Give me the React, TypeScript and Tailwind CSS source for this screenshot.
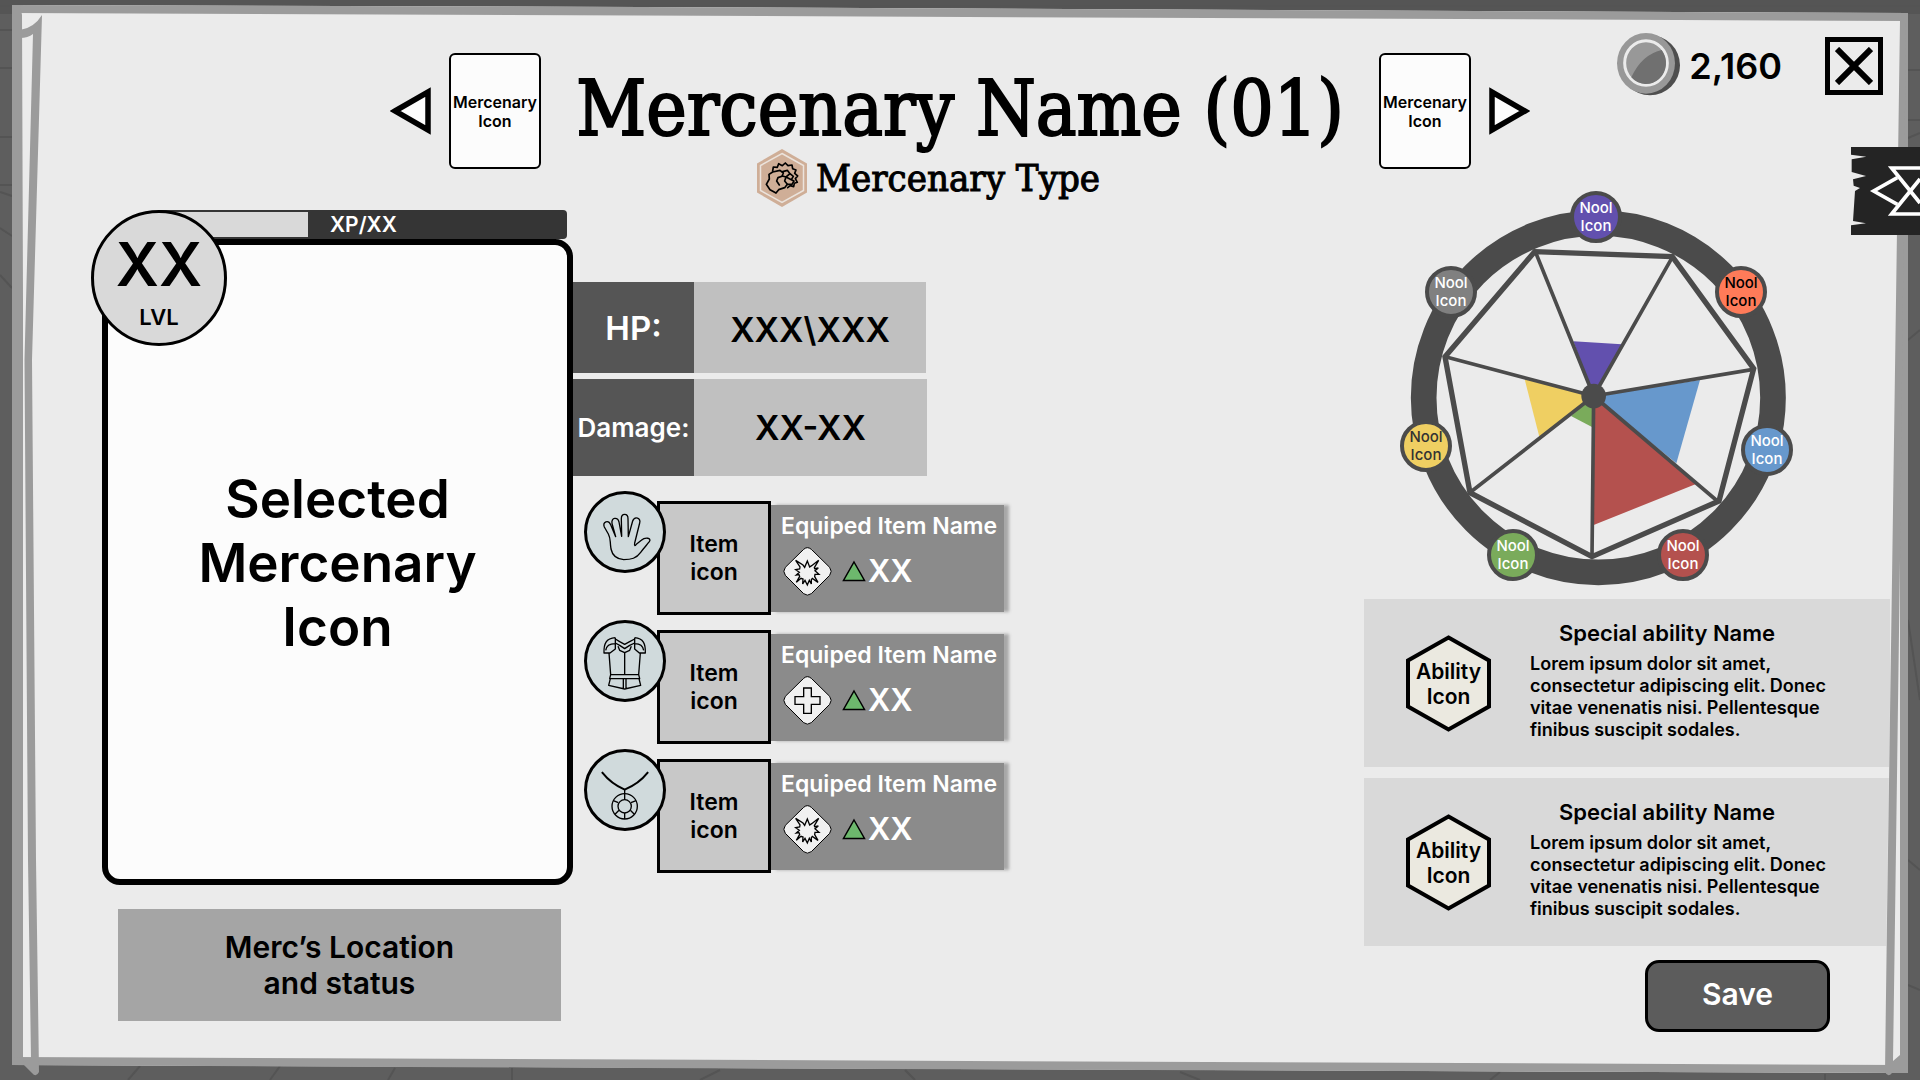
import React from "react";

const INK = "#4b4b4b";

function Backdrop() {
  return (
    <svg
      className="absolute inset-0 h-full w-full"
      viewBox="0 0 1920 1080"
      preserveAspectRatio="none"
      aria-hidden="true"
    >
      <rect width="1920" height="1080" fill="#5e5e5e" />
      <rect width="1920" height="14" fill="#555555" />
      <g stroke="#545454" strokeWidth="2" fill="none">
        <path d="M0 6H1920M0 30H12M0 68H12M0 137H12M0 185H12M0 192L12 196M0 228L12 236M0 275L12 288" />
        <path d="M1908 70H1920M1908 120H1920M1908 138L1920 133M1908 340L1920 330M1908 620L1920 700M1908 860L1920 870M1908 985L1920 990" />
        <path d="M140 1066L128 1080M280 1066L270 1080M395 1068L388 1080M512 1068V1080M720 1070L700 1080M905 1070L915 1080M1180 1072L1200 1080M1500 1072L1490 1080M1825 1074V1080" />
      </g>
      <path d="M12 5L640 7L1908 13V1073L12 1065Z" fill="#ebebeb" />
    </svg>
  );
}

function Frame() {
  return (
    <svg
      className="pointer-events-none absolute inset-0 h-full w-full"
      viewBox="0 0 1920 1080"
      preserveAspectRatio="none"
      aria-hidden="true"
      fill="#9b9b9b"
    >
      <path d="M1892 580H1902L1899 960H1886Z" fill="#ebebeb" />
      <path d="M12 5L640 7L1908 13V21L640 15.500L12 13Z" />
      <path d="M12 5H20L22 15L23 300V1058L25 1065H12Z" />
      <path d="M1900 14H1908V1073H1900Z" />
      <path d="M12 1057L640 1059.500L1900 1065V1073L640 1068L12 1065Z" />
      <path d="M42 15L32 360L36 860L39 1072Q36 1078 32 1073L22 1063L31 1058L28 860L24.500 360L33 34Q28 38 20 38V30Q34 28 42 15Z" />
      <path d="M1900 21H1906L1900 560L1895 920L1893 1061L1900 1055V1073H1892Q1888 1078 1885 1072L1887 920L1892 580Z" />
    </svg>
  );
}

function Arrow({ flip = false }: { flip?: boolean }) {
  return (
    <button
      type="button"
      aria-label={flip ? "Next mercenary" : "Previous mercenary"}
      className="flex h-[116px] items-center"
    >
      <svg width="41" height="48" viewBox="0 0 41 48" className={flip ? "rotate-180" : ""}>
        <path d="M5 24L38 5V43Z" fill="#fcfcfc" stroke="#000" strokeWidth="5.500" />
      </svg>
    </button>
  );
}

function MercThumb() {
  return (
    <div className="flex h-[116px] w-[92px] items-center justify-center rounded-md border-2 border-black bg-[#fcfcfc] pt-0.5 text-center text-base leading-[19px] font-semibold">
      Mercenary
      <br />
      Icon
    </div>
  );
}

function TypeIcon() {
  return (
    <svg width="52" height="58" viewBox="0 0 52 58" aria-hidden="true">
      <path d="M26 0L51 14.500V43.500L26 58L1 43.500V14.500Z" fill="#cfae97" />
      <path d="M26 4.500L47.500 16.500V41.500L26 53.500L4.500 41.500V16.500Z" fill="none" stroke="#ebe3dc" strokeWidth="1.500" />
      <g
        transform="translate(-6 -4) scale(0.3333)"
        fill="none"
        stroke="#000"
        strokeWidth="5"
        strokeLinejoin="round"
        strokeLinecap="round"
      >
        <path d="M68 78L70 66L82 67L86 56L97 62L106 54L114 62L126 60L128 71L138 75L134 85L143 93L136 101L142 112L133 115L131 125L121 122L113 128" />
        <path d="M78 144L60 134L49 118L58 102L57 88L68 81L90 76L100 84L96 94L84 98L80 108L88 120M78 144L86 134L104 128L112 118" />
        <path d="M98 80L112 76L120 86L108 96L97 93M120 86L130 94L124 104L108 96M124 104L132 108L126 118L112 118L104 108L108 96" />
      </g>
    </svg>
  );
}

function Coin() {
  return (
    <svg width="63" height="63" viewBox="0 0 189 189" aria-hidden="true">
      <circle cx="99" cy="97" r="90" fill="#4e4e4e" />
      <ellipse cx="87" cy="91" rx="87" ry="91" fill="#989898" />
      <ellipse cx="87" cy="90" rx="64" ry="67" fill="#989898" stroke="#ebebeb" strokeWidth="9" />
      <path d="M134 51Q74 65 43 133A60 63 0 0 0 134 51Z" fill="#707070" />
    </svg>
  );
}

function SideTab() {
  return (
    <button type="button" aria-label="Open side menu" className="absolute top-[147px] right-0">
      <svg width="69" height="88" viewBox="0 0 207 264">
        <path
          d="M0 0H207V264H0V235L45 229L6 222L12 132L27 123L8 116L6 97L45 87L2 75V37L46 29L0 23Z"
          fill="#242424"
        />
        <g fill="none" stroke="#fff" strokeWidth="11">
          <path d="M207 63H122L207 168M207 201H122L207 96" />
          <path d="M139 92L68 132L139 172" />
        </g>
      </svg>
    </button>
  );
}

function HandIcon() {
  return (
    <svg width="76" height="76" viewBox="0 0 228 228" fill="none" stroke="#000" strokeWidth="4" strokeLinejoin="round">
      <path d="M72 165C68 140 72 135 64 120L52 99C46 84 64 76 71 92L86 128L75 88C72 70 92 68 96 84L104 127L103 74C103 57 123 57 123 74L124 128L137 81C143 65 163 72 158 87L143 147C141 158 144 156 148 151L163 139C174 129 195 131 187 143C179 153 169 164 161 175C148 193 133 197 110 197C88 195 76 184 72 165Z" />
    </svg>
  );
}

function ArmorIcon() {
  return (
    <svg width="76" height="76" viewBox="0 0 228 228" fill="none" stroke="#000" strokeWidth="4" strokeLinejoin="round">
      <path d="M85 44C57 46 50 62 51 90H69L85 78V44M143 44C169 46 176 62 175 90H157L143 78V44M56 82C58 70 66 62 84 62M170 82C168 70 162 62 144 62" />
      <path d="M85 48L98 56L113 64L128 56L143 48M85 60L98 67L113 77L128 67L143 60M93 70L98 82L113 89L128 82L133 70" />
      <path d="M66 90L71 155H155L160 90M113 90V155M71 155L68 167H158L155 155M70 167L65 187L113 198L161 187L156 167M109 167V197M117 167V197" />
    </svg>
  );
}

function NecklaceIcon() {
  return (
    <svg width="76" height="76" viewBox="0 0 228 228" fill="none" stroke="#000" strokeWidth="4">
      <path d="M46 62Q72 95 113 113Q156 95 182 62" strokeWidth="6" strokeLinecap="round" />
      <circle cx="113" cy="163" r="38" />
      <circle cx="113" cy="163" r="20" />
      <path d="M113 113V143M113 183V201M94 152L79 146M132 152L147 146M96 175L84 187M130 175L142 187" />
    </svg>
  );
}

function Diamond({ kind }: { kind: "burst" | "cross" }) {
  return (
    <svg width="49" height="49" viewBox="0 0 147 147" stroke="#000" strokeLinejoin="miter" aria-hidden="true">
      <path
        d="M62 7Q73 -3 85 7L140 61Q149 73 140 85L85 140Q73 149 62 140L7 85Q-2 73 7 61Z"
        fill="#f1f1f1"
        strokeWidth="3"
      />
      {kind === "burst" ? (
        <path
          d="M38 40L60 54L65 61L73 42L80 60L86 56L107 40L94 62L95 65L106 63L96 71L108 82L96 82L95 89L105 106L88 94L85 98L85 111L79 100L73 114L66 100L59 111L60 96L54 94L40 106L50 88L48 83L40 84L49 76L38 68L50 66L51 60Z"
          fill="none"
          strokeWidth="4"
        />
      ) : (
        <path d="M62 36H85V62H111V85H85V112H62V85H36V62H62Z" fill="none" strokeWidth="4" />
      )}
    </svg>
  );
}

const items: { icon: React.ReactNode; kind: "burst" | "cross" }[] = [
  { icon: <HandIcon />, kind: "burst" },
  { icon: <ArmorIcon />, kind: "cross" },
  { icon: <NecklaceIcon />, kind: "burst" },
];

function ItemRow({ icon, kind }: { icon: React.ReactNode; kind: "burst" | "cross" }) {
  return (
    <li className="relative ml-[84px] flex items-center">
      <div className="relative flex size-[114px] items-center justify-center border-3 border-black bg-[#c8c8c8] text-center text-[23px] leading-7 font-semibold">
        Item
        <br />
        icon
      </div>
      <div className="h-[107px] w-[233px] bg-[#8b8b8b] px-[10px] pt-[7px] text-white shadow-[5px_0_3px_#a8a8a8]">
        <div className="text-[23px] leading-7 font-semibold whitespace-nowrap">Equiped Item Name</div>
        <div className="mt-[7px] flex items-center pl-[2px]">
          <Diamond kind={kind} />
          <svg width="24" height="22" viewBox="0 0 24 22" className="ml-[10px]" aria-hidden="true">
            <path d="M12 2L22.500 20.500H1.500Z" fill="#6db86d" stroke="#000" strokeWidth="1.500" />
          </svg>
          <span className="ml-[2px] text-[31px] leading-10 font-semibold">XX</span>
        </div>
      </div>
      <div className="absolute -top-[10px] -left-[73px] flex size-[82px] items-center justify-center rounded-full border-3 border-black bg-[#d0dadc]">
        {icon}
      </div>
    </li>
  );
}

const nools = [
  { name: "purple", spot: "left-[190px] top-[11px]", look: "bg-[#6250ae] text-white" },
  { name: "orange", spot: "left-[335px] top-[86px]", look: "bg-[#ff7b59] text-black" },
  { name: "blue", spot: "left-[361px] top-[244px]", look: "bg-[#6798cc] text-white" },
  { name: "red", spot: "left-[277px] top-[349px]", look: "bg-[#b4514e] text-white" },
  { name: "green", spot: "left-[107px] top-[349px]", look: "bg-[#7aab5b] text-white" },
  { name: "yellow", spot: "left-[20px] top-[240px]", look: "bg-[#efcf62] text-[#333333]" },
  { name: "gray", spot: "left-[45px] top-[86px]", look: "bg-[#808080] text-white" },
];

function NoolWheel() {
  return (
    <div className="relative ml-4 h-[420px] w-[440px]">
      <svg width="440" height="420" viewBox="0 0 1320 1260" aria-hidden="true">
        <circle cx="655" cy="653" r="524" fill="none" stroke={INK} strokeWidth="77" />
        <path d="M641 648L580 484L725 493Z" fill="#6250ae" />
        <path d="M641 648L960 600L889 850Z" fill="#6798cc" />
        <path d="M641 648L948 912L641 1035Z" fill="#b4514e" />
        <path d="M641 648L636 741L573 708Z" fill="#7aab5b" />
        <path d="M641 648L478 770L434 598Z" fill="#efcf62" />
        <path
          d="M641 648L468 220M641 648L875 235M641 648L1120 568M641 648L1012 963M641 648L636 1128M641 648L272 936M641 648L196 530"
          stroke={INK}
          strokeWidth="11"
        />
        <path
          d="M464 215L877 230L1121 566L1017 963L636 1130L270 938L195 530Z"
          fill="none"
          stroke={INK}
          strokeWidth="16"
        />
        <circle cx="641" cy="648" r="37" fill={INK} />
      </svg>
      {nools.map((n) => (
        <div
          key={n.name}
          className={`absolute flex size-[52px] items-center justify-center rounded-full border-4 border-[#4b4b4b] text-center text-[15px] leading-[18px] font-medium ${n.spot} ${n.look}`}
        >
          Nool
          <br />
          Icon
        </div>
      ))}
    </div>
  );
}

function Ability() {
  return (
    <article className="flex h-[168px] items-center bg-[#d9d9d9] pl-[42px]">
      <div className="relative h-[97px] w-[85px]">
        <svg width="85" height="97" viewBox="0 0 85 97" aria-hidden="true">
          <path d="M42.500 2.500L83 25.500V71.500L42.500 94.500L2 71.500V25.500Z" fill="#ebe9e0" stroke="#000" strokeWidth="4" />
        </svg>
        <div className="absolute inset-0 flex items-center justify-center pt-0.5 text-center text-[21px] leading-[25px] font-semibold">
          Ability
          <br />
          Icon
        </div>
      </div>
      <div className="ml-[39px] w-[310px] pb-[6px]">
        <h3 className="pl-[29px] text-[22px] leading-[26px] font-semibold">Special ability Name</h3>
        <p className="mt-[7px] text-lg leading-[22px] font-semibold">
          Lorem ipsum dolor sit amet, consectetur adipiscing elit. Donec vitae venenatis nisi. Pellentesque finibus
          suscipit sodales.
        </p>
      </div>
    </article>
  );
}

export default function App() {
  return (
    <div className="relative min-h-screen w-full overflow-hidden font-['Inter',sans-serif] text-black">
      <Backdrop />
      <div className="relative">
        <header className="grid grid-cols-[1fr_auto_1fr] items-start px-[37px] pt-[37px]">
          <div />
          <div className="flex items-start pt-4">
            <Arrow />
            <div className="ml-[18px]">
              <MercThumb />
            </div>
            <div className="flex w-[838px] flex-col items-center">
              <h1 className="pt-4 font-['DejaVu_Serif_Condensed','DejaVu_Serif',serif] text-[76px] leading-20 whitespace-nowrap [-webkit-text-stroke:2px_black]">
                Mercenary Name (01)
              </h1>
              <div className="mr-[64px] flex items-center gap-2">
                <TypeIcon />
                <p className="font-['DejaVu_Serif_Condensed','DejaVu_Serif',serif] text-[38px] leading-[58px] whitespace-nowrap [-webkit-text-stroke:1px_black]">
                  Mercenary Type
                </p>
              </div>
            </div>
            <div className="mr-[18px]">
              <MercThumb />
            </div>
            <Arrow flip />
          </div>
          <div className="flex items-start justify-end">
            <div className="-mt-1 flex items-center gap-[9px]">
              <Coin />
              <span className="pt-0.5 text-4xl font-semibold">2,160</span>
            </div>
            <button
              type="button"
              aria-label="Close"
              className="ml-[43px] flex size-[58px] items-center justify-center border-5 border-black"
            >
              <svg width="38" height="38" viewBox="0 0 38 38">
                <path d="M2 2L36 36M36 2L2 36" stroke="#000" strokeWidth="6" />
              </svg>
            </button>
          </div>
        </header>

        <main className="flex items-start pr-[30px] pl-[102px]">
          <section className="w-[471px] pt-[3px]">
            <div className="relative">
              <div className="mr-[6px] ml-14 flex h-[29px] items-center rounded bg-[#353535] py-[2px]">
                <div className="h-full w-[150px] bg-[#d9d9d9]" />
                <span className="ml-[22px] text-[21px] leading-[24px] font-semibold text-white">XP/XX</span>
              </div>
              <div className="flex h-[646px] items-center justify-center rounded-[18px] border-6 border-black bg-[#fcfcfc] pt-0.5 text-center text-[53px] leading-16 font-semibold">
                Selected
                <br />
                Mercenary
                <br />
                Icon
              </div>
              <div className="absolute top-0 -left-[11px] flex size-[136px] flex-col items-center rounded-full border-3 border-black bg-[#d9d9d9] pt-[15px]">
                <span className="text-[60px] leading-[72px] font-semibold">XX</span>
                <span className="mt-[4px] text-[22px] leading-[26px] font-semibold">LVL</span>
              </div>
            </div>
            <div className="mt-6 ml-4 flex h-[112px] w-[443px] items-center justify-center bg-[#a5a5a5] text-center text-3xl leading-9 font-semibold">
              Merc’s Location
              <br />
              and status
            </div>
          </section>

          <section className="pt-[75px]">
            <dl className="flex flex-col gap-[6px]">
              <div className="flex h-[91px] w-[353px]">
                <dt className="flex w-[121px] items-center justify-center bg-[#555555] pt-0.5 text-[33px] font-semibold text-white">
                  HP:
                </dt>
                <dd className="flex flex-1 items-center justify-center bg-[#c0c0c0] pt-1 text-[34px] font-semibold">
                  XXX\XXX
                </dd>
              </div>
              <div className="flex h-[97px] w-[354px]">
                <dt className="flex w-[121px] items-center justify-center bg-[#555555] text-[26px] font-semibold text-white">
                  Damage:
                </dt>
                <dd className="flex flex-1 items-center justify-center bg-[#c0c0c0] text-[34px] font-semibold">
                  XX-XX
                </dd>
              </div>
            </dl>
            <ul className="mt-[25px] flex flex-col gap-[15px]">
              {items.map((item, i) => (
                <ItemRow key={i} icon={item.icon} kind={item.kind} />
              ))}
            </ul>
          </section>

          <section className="-mt-[27px] ml-auto w-[526px]">
            <NoolWheel />
            <div className="-mt-px flex flex-col gap-[11px]">
              <Ability />
              <Ability />
            </div>
            <div className="mt-[14px] flex justify-end pr-[60px]">
              <button
                type="button"
                className="h-[72px] w-[185px] rounded-[14px] border-3 border-black bg-[#5c5c5c] pb-1 text-3xl font-semibold text-white"
              >
                Save
              </button>
            </div>
          </section>
        </main>
      </div>
      <Frame />
      <SideTab />
    </div>
  );
}
